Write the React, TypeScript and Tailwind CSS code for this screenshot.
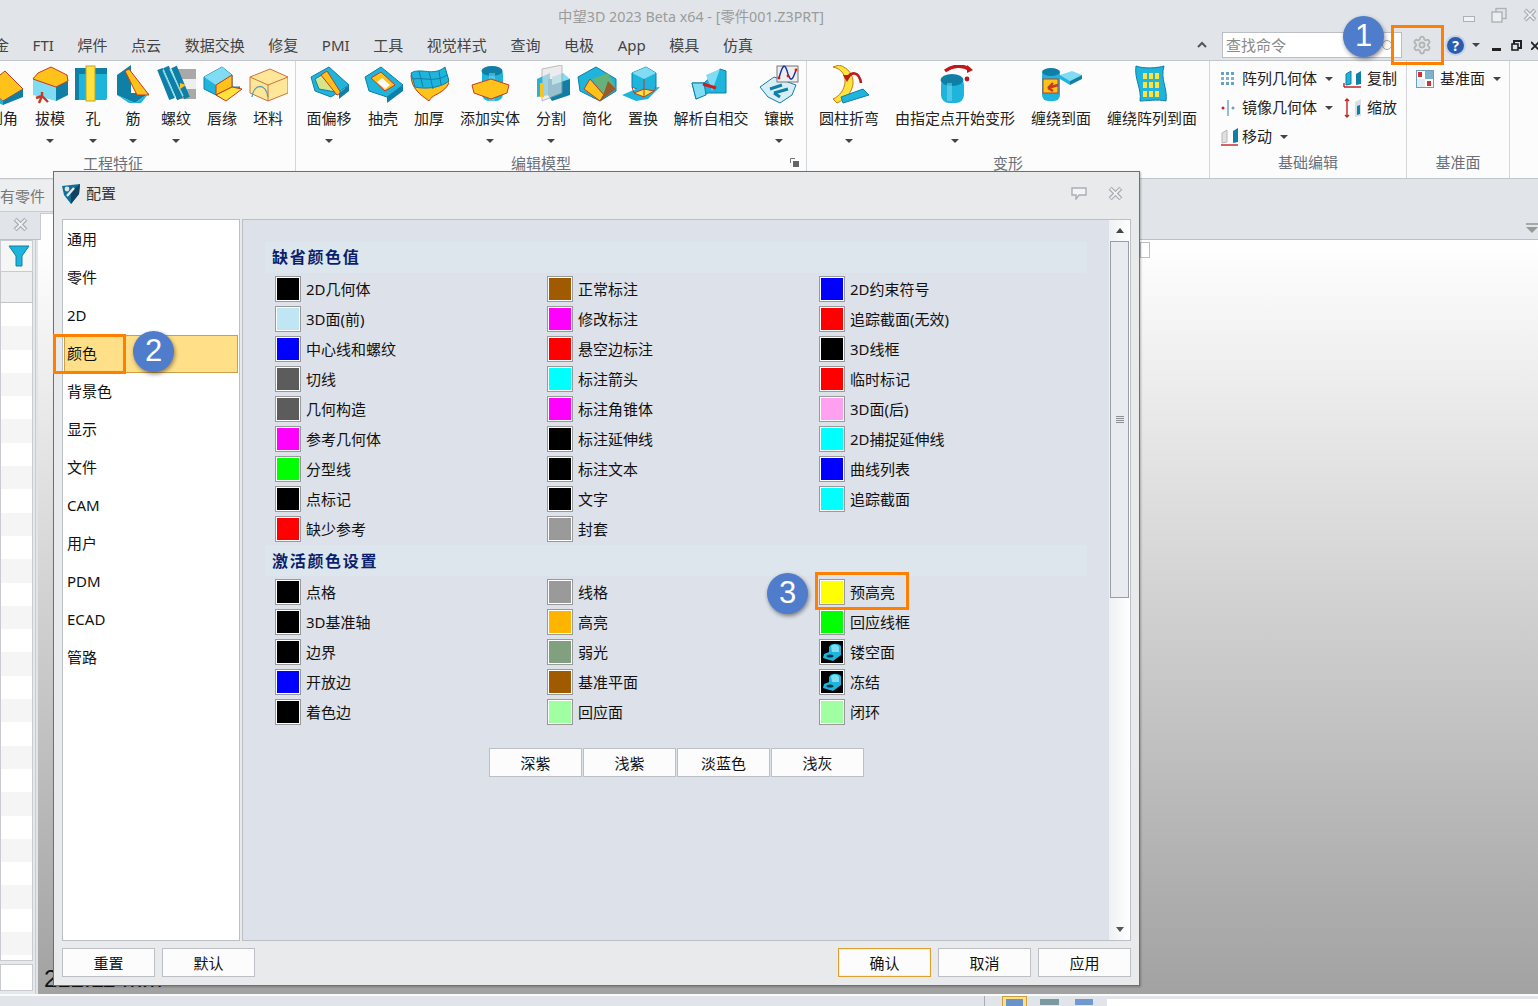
import React from 'react';
import { Settings } from 'lucide-react';

const Caret = () => <span className="inline-block w-0 h-0 border-x-[4px] border-x-transparent border-t-[4px] border-t-[#444]" />;

// ---- ribbon icons
const Svg: React.FC<{ children: React.ReactNode; w?: number; h?: number }> = ({ children, w = 40, h = 40 }) => (
  <svg width={w} height={h} viewBox={`0 0 ${w} ${h}`} className="shrink-0">{children}</svg>
);
const C1 = '#1fb4dc', C2 = '#0f7fa6', C3 = '#7fdcf2', Y1 = '#ffc21a', Y2 = '#ffe23c', R = '#c23b22';

const ribbonIcons: Record<string, React.ReactNode> = {
  chamfer: <Svg><polygon points="2,22 22,6 40,24 20,36" fill={Y1} stroke={R} /><polygon points="2,22 20,36 20,40 2,32" fill={C1} /><polygon points="20,36 40,24 40,32 20,40" fill={C2} /></Svg>,
  draft: <Svg><polygon points="3,12 3,30 26,36 38,30 38,12" fill={C3} /><polygon points="26,20 38,14 38,30 26,36" fill={C2} /><polygon points="8,8 21,2 37,10 38,16 26,22 3,14" fill={Y1} stroke={R} /><path d="M9 38 L12 31 L12 27 M12 31 L18 37 M12 31 L6 33" stroke={R} strokeWidth="2.4" fill="none" /></Svg>,
  hole: <Svg><rect x="2" y="3" width="32" height="32" rx="2" fill={C1} /><rect x="2" y="3" width="32" height="6" fill={C2} /><rect x="2" y="3" width="4" height="32" fill={C2} /><rect x="13" y="1" width="9" height="35" fill={Y2} stroke="#c9a020" /></Svg>,
  rib: <Svg><polygon points="4,10 18,0 18,28 36,28 22,38 4,30" fill={C2} /><polygon points="12,6 16,4 36,30 24,30" fill={Y1} stroke={R} /><polygon points="4,30 22,38 36,28 28,38 16,38" fill={C1} /></Svg>,
  thread: <Svg><rect x="20" y="4" width="20" height="30" fill="#a9a9a9" /><rect x="20" y="14" width="20" height="10" fill="#eee" /><path d="M4 4 L16 34 M10 2 L24 34 M18 2 L31 33" stroke={C2} strokeWidth="6" /><path d="M7 5 L19 32 M14 4 L27 31" stroke={C3} strokeWidth="1.5" /><polygon points="24,18 30,20 24,24" fill={Y1} /></Svg>,
  lip: <Svg><polygon points="2,12 20,2 30,10 30,22 38,22 22,34 2,24" fill={C1} stroke={C2} /><polygon points="2,12 20,2 30,10 14,20" fill={C3} /><polygon points="14,20 30,10 30,22 14,30" fill={Y1} stroke={R} /><polygon points="14,30 30,22 40,24 24,36" fill={Y2} stroke={R} /></Svg>,
  blank: <Svg><polygon points="2,12 22,4 40,12 40,28 20,36 2,28" fill="#ffe79a" stroke="#d0703a" /><path d="M2 12 L20 20 L40 12 M20 20 L20 36" stroke="#d0703a" fill="none" /><path d="M4 32 C6 18 18 18 20 32" stroke="#5a9bb0" strokeWidth="1.4" fill="none" /></Svg>,
  offset: <Svg><polygon points="2,12 20,2 40,20 22,32 6,26" fill={C1} stroke={C2} /><polygon points="6,14 16,8 32,28 10,24" fill="#d7e58a" stroke={C2} /><polygon points="18,6 32,28 28,30 12,10" fill={Y1} stroke={R} /><polygon points="30,28 40,20 40,26 30,34" fill={C2} /></Svg>,
  shell: <Svg><polygon points="2,12 18,2 40,20 24,32 6,26" fill={C1} stroke={C2} /><polygon points="8,13 18,7 32,20 22,26" fill={Y1} stroke={R} /><polygon points="14,17 19,13 27,20 22,24" fill="#fff" /><polygon points="24,32 40,20 40,26 24,38" fill={C2} /></Svg>,
  thicken: <Svg><path d="M2 10 C12 4 24 14 36 4 L40 18 C34 30 24 28 20 36 C12 30 2 24 2 10Z" fill={Y1} stroke={R} /><path d="M2 8 C12 2 24 12 36 2 L40 16 C30 24 14 24 6 22Z" fill={C1} stroke={C2} /><path d="M10 6 L14 22 M20 7 L24 24 M30 6 L32 20 M4 14 C14 12 26 18 38 10" stroke={C2} fill="none" /></Svg>,
  addSolid: <Svg w={42}><rect x="13" y="2" width="21" height="34" rx="7" fill={C1} /><ellipse cx="23" cy="6" rx="10.5" ry="5" fill={C2} /><rect x="20" y="8" width="6" height="28" fill={C3} opacity=".5" /><polygon points="3,20 22,14 40,20 38,28 22,34 5,28" fill={Y1} stroke={R} /></Svg>,
  split: <Svg w={42}><polygon points="7,14 20,8 20,30 7,32" fill={C1} /><polygon points="18,14 40,14 40,30 22,36 18,30" fill={C2} /><polygon points="22,12 33,8 40,14 22,20" fill={C3} /><polygon points="12,4 32,0 32,28 12,36" fill="#e4e4e4" opacity=".65" stroke="#999" /><rect x="10" y="18" width="4" height="14" fill={Y1} /></Svg>,
  simplify: <Svg w={42}><polygon points="2,12 20,2 40,14 40,26 24,36 4,26" fill={C1} stroke={C2} /><polygon points="16,14 32,8 40,24 28,30" fill="#65b27a" /><polygon points="14,14 28,30 24,36 8,24" fill={Y1} stroke={R} /><polygon points="32,16 40,24 24,36 28,28" fill="#9a5a2a" /></Svg>,
  replace: <Svg w={42}><polygon points="10,8 24,2 34,8 34,22 24,28 10,22" fill={C1} stroke={C2} /><polygon points="10,8 24,2 34,8 22,14" fill={C3} /><polygon points="0,30 14,24 38,22 26,34 14,36" fill={C1} /><polygon points="12,28 22,24 32,26 22,32" fill={Y2} stroke={R} /><path d="M10 22 L12 28 M34 22 L32 26 M22 14 L22 32" stroke={R} /></Svg>,
  intersect: <Svg w={42}><polygon points="2,18 14,18 30,4 36,6 36,28 18,28 6,34" fill={C1} stroke={C2} /><polygon points="2,18 14,18 16,30 6,34" fill={C3} stroke={C2} /><polygon points="16,10 30,4 22,26" fill={C3} /><path d="M13 19 L26 23" stroke="#d01c1c" strokeWidth="3" /></Svg>,
  inlay: <Svg w={42}><polygon points="2,22 16,12 38,20 34,30 22,38 10,32" fill="#d8eef6" stroke={C2} /><path d="M12 24 L24 20 M16 28 L30 24 M16 28 L22 32" stroke={C2} strokeWidth="3" /><rect x="19" y="1" width="21" height="16" fill="#eee" stroke="#777" /><path d="M21 13 C25 -2 27 -2 30 9 C33 18 35 14 38 5" stroke="#1a2fa0" strokeWidth="1.4" fill="none" /><circle cx="21" cy="13" r="1.4" fill="#d01c1c" /><circle cx="30" cy="11" r="1.4" fill="#d01c1c" /><circle cx="38" cy="5" r="1.4" fill="#d01c1c" /></Svg>,
  bend: <Svg><path d="M4 2 C22 6 18 28 4 34 L8 38 C28 30 30 6 10 0Z" fill={Y2} stroke="#c57a10" /><polygon points="12,32 34,24 40,30 14,38" fill={C1} stroke={C2} /><path d="M18 14 C22 6 30 6 32 18" stroke="#c01818" strokeWidth="2.6" fill="none" /><polygon points="14,10 22,10 18,17" fill="#c01818" /></Svg>,
  deform: <Svg><rect x="6" y="12" width="23" height="26" rx="8" fill={C1} /><ellipse cx="17" cy="15" rx="11.5" ry="6" fill={C2} /><rect x="12" y="18" width="5" height="18" fill={C3} opacity=".5" /><path d="M10 6 C18 0 28 0 34 4" stroke="#c01818" strokeWidth="3.4" fill="none" /><polygon points="32,0 38,5 32,8" fill="#c01818" /><circle cx="32" cy="14" r="2.4" fill="#c01818" /></Svg>,
  wrap: <Svg w={42}><rect x="2" y="4" width="18" height="32" rx="6" fill={C1} /><ellipse cx="11" cy="7" rx="9" ry="4" fill={C2} /><rect x="3" y="14" width="15" height="14" fill={Y1} stroke={R} /><path d="M18 20 L8 23 M8 23 L13 18 M8 23 L13 26" stroke={R} strokeWidth="2.4" /><polygon points="20,10 32,6 42,10 30,16" fill={C3} /><polygon points="20,10 30,16 30,20 20,14" fill={C1} /><polygon points="30,16 42,10 42,14 30,20" fill={C2} /></Svg>,
  wrapArray: <Svg><path d="M4 1 C12 4 26 3 32 1 C28 14 36 24 34 36 C26 34 14 36 8 36 C10 24 2 14 4 1Z" fill={C1} stroke={C2} />{[8, 17, 26].map(y => [10, 16, 22].map(x => <rect key={`${x}-${y}`} x={x + 1} y={y} width="4" height="6" fill={Y2} />))}</Svg>,
};

const ribbonGroups = [
  {
    label: '工程特征', w: 'w-[319px] -ml-[23px]', pad: 'pr-[46px]', foot: false,
    items: [
      { t: '倒角', i: 'chamfer', w: 'w-[52px]', c: false },
      { t: '拔模', i: 'draft', w: 'w-[42px]', c: true },
      { t: '孔', i: 'hole', w: 'w-[44px]', c: true },
      { t: '筋', i: 'rib', w: 'w-[36px]', c: true },
      { t: '螺纹', i: 'thread', w: 'w-[50px]', c: true },
      { t: '唇缘', i: 'lip', w: 'w-[42px]', c: false },
      { t: '坯料', i: 'blank', w: 'w-[50px]', c: false },
    ],
  },
  {
    label: '编辑模型', w: 'w-[511px]', pad: 'pr-[20px]', foot: true,
    items: [
      { t: '面偏移', i: 'offset', w: 'w-[66px]', c: true },
      { t: '抽壳', i: 'shell', w: 'w-[42px]', c: false },
      { t: '加厚', i: 'thicken', w: 'w-[50px]', c: false },
      { t: '添加实体', i: 'addSolid', w: 'w-[72px]', c: true },
      { t: '分割', i: 'split', w: 'w-[50px]', c: true },
      { t: '简化', i: 'simplify', w: 'w-[42px]', c: false },
      { t: '置换', i: 'replace', w: 'w-[50px]', c: false },
      { t: '解析自相交', i: 'intersect', w: 'w-[86px]', c: false },
      { t: '镶嵌', i: 'inlay', w: 'w-[50px]', c: true },
    ],
  },
  {
    label: '变形', w: 'w-[403px]', pad: '', foot: false,
    items: [
      { t: '圆柱折弯', i: 'bend', w: 'w-[84px]', c: true },
      { t: '由指定点开始变形', i: 'deform', w: 'w-[128px]', c: true },
      { t: '缠绕到面', i: 'wrap', w: 'w-[84px]', c: false },
      { t: '缠绕阵列到面', i: 'wrapArray', w: 'w-[98px]', c: false },
    ],
  },
];

const menus = ['钣金', 'FTI', '焊件', '点云', '数据交换', '修复', 'PMI', '工具', '视觉样式', '查询', '电极', 'App', '模具', '仿真'];

const PatternIcon = () => (
  <Svg w={16} h={16}>{[1, 6, 11].map(y => [1, 6, 11].map(x => <rect key={`${x}${y}`} x={x} y={y} width="3" height="3" fill={y === 6 ? '#7fb2cc' : '#6aa0c0'} />))}</Svg>
);
const MirrorIcon = () => (
  <Svg w={16} h={18}><path d="M8 1 V17" stroke="#6aa0c0" strokeWidth="1.4" /><circle cx="3" cy="9" r="1.5" fill="#c62222" /><circle cx="13" cy="9" r="1.5" fill="#6aa0c0" /></Svg>
);
const CopyIcon = () => (
  <Svg w={20} h={20}><polygon points="3,5 8,2 8,15 3,16" fill={C1} stroke={C2} /><polygon points="13,5 18,2 18,15 13,16" fill={C2} /><path d="M1 18 H18 M1 14 V18" stroke="#c62222" strokeWidth="1.4" /></Svg>
);
const ScaleIcon = () => (
  <Svg w={20} h={20}><path d="M4 1 V19 M2 3 L4 1 L6 3 M2 17 L4 19 L6 17" stroke="#c62222" strokeWidth="1.4" fill="none" /><polygon points="12,4 18,1 18,18 12,19" fill="#d9dfe2" /><polygon points="14,8 17,7 17,16 14,17" fill={C2} /></Svg>
);
const MoveIcon = () => (
  <Svg w={20} h={20}><polygon points="2,6 7,3 7,15 2,16" fill="#e0e0e0" stroke="#b8b8b8" /><polygon points="13,4 18,1 18,15 13,16" fill={C2} /><path d="M1 18 H18" stroke="#c62222" strokeWidth="1.4" /></Svg>
);
const PlaneIcon = () => (
  <Svg w={18} h={18}><rect x=".5" y=".5" width="17" height="17" fill="#fff" stroke="#6aa0c0" /><rect x="9" y="1" width="8" height="8" fill="#7fb2cc" /><rect x="1" y="9" width="8" height="8" fill="#e0edf4" /><rect x="2" y="2" width="4" height="5" fill="#d73030" /><rect x="11" y="11" width="4" height="5" fill="#d73030" /></Svg>
);

const BoldX: React.FC<{ size?: number }> = ({ size = 14 }) => (
  <svg width={size} height={size} viewBox="0 0 14 14" className="shrink-0">
    <path d="M2 2 L12 12 M12 2 L2 12" stroke="#a9aeb4" strokeWidth="4" />
    <path d="M2.5 2.5 L11.5 11.5 M11.5 2.5 L2.5 11.5" stroke="#f2f3f4" strokeWidth="1.6" />
  </svg>
);

const FreezeSwatch = () => (
  <svg viewBox="0 0 22 22" className="w-full h-full block">
    <rect width="22" height="22" fill="#000" />
    <path d="M8 6 C10 2 17 2 20 5 L20 14 L12 20 L2 17 L3 13 L8 11Z" fill={C1} />
    <path d="M10 5 C13 3 16 3 18 6 L18 11 L11 11Z" fill={C3} />
    <ellipse cx="9" cy="15" rx="3.5" ry="1.6" fill="#06384d" />
  </svg>
);

type Sw = [string, string];
const sec1: Sw[][] = [
  [['2D几何体', '#000000'], ['3D面(前)', '#bfe6f2'], ['中心线和螺纹', '#0000ff'], ['切线', '#5c5c5c'], ['几何构造', '#5c5c5c'], ['参考几何体', '#ff00ff'], ['分型线', '#00ff00'], ['点标记', '#000000'], ['缺少参考', '#ff0000']],
  [['正常标注', '#a05a00'], ['修改标注', '#ff00ff'], ['悬空边标注', '#ff0000'], ['标注箭头', '#00ffff'], ['标注角锥体', '#ff00ff'], ['标注延伸线', '#000000'], ['标注文本', '#000000'], ['文字', '#000000'], ['封套', '#9a9a9a']],
  [['2D约束符号', '#0000ff'], ['追踪截面(无效)', '#ff0000'], ['3D线框', '#000000'], ['临时标记', '#ff0000'], ['3D面(后)', '#ffa0f0'], ['2D捕捉延伸线', '#00ffff'], ['曲线列表', '#0000ff'], ['追踪截面', '#00ffff']],
];
const sec2: Sw[][] = [
  [['点格', '#000000'], ['3D基准轴', '#000000'], ['边界', '#000000'], ['开放边', '#0000ff'], ['着色边', '#000000']],
  [['线格', '#9a9a9a'], ['高亮', '#ffb400'], ['弱光', '#80a080'], ['基准平面', '#a05a00'], ['回应面', '#a0ffa0']],
  [['预高亮', '#ffff00'], ['回应线框', '#00ff00'], ['镂空面', 'img'], ['冻结', 'img'], ['闭环', '#a0ffa0']],
];

const SwatchGrid: React.FC<{ cols: Sw[][] }> = ({ cols }) => (
  <div className="grid grid-cols-[272px_272px_272px] pl-[10px]">
    {cols.map((col, i) => (
      <div key={i} className="flex flex-col">
        {col.map(([label, color]) => (
          <div key={label} className="h-[30px] flex items-center gap-[5px]">
            <div className="w-[26px] h-[26px] border border-[#9a9a9a] bg-white p-px shrink-0">
              {color === 'img' ? <FreezeSwatch /> : <div className="w-full h-full" style={{ background: color }} />}
            </div>
            <span className="text-[15px] text-[#111] whitespace-nowrap">{label}</span>
          </div>
        ))}
      </div>
    ))}
  </div>
);

const DlgButton: React.FC<{ children: React.ReactNode; primary?: boolean }> = ({ children, primary }) => (
  <div className={`w-[93px] h-[29px] pt-px flex items-center justify-center bg-[#fcfcfc] text-[15px] text-[#111] border ${primary ? 'border-[#e0a030] shadow-[inset_0_0_0_1px_#fff3c0]' : 'border-[#bcc0c6]'}`}>
    {children}
  </div>
);

const Badge: React.FC<{ n: number; cls: string }> = ({ n, cls }) => (
  <div className={`absolute w-[41px] h-[41px] rounded-full bg-[#4f7ccb] text-white text-[31px] flex items-center justify-center shadow-[1px_2px_4px_rgba(0,0,0,0.45)] font-['Liberation_Sans'] ${cls}`}>{n}</div>
);

const navItems = ['通用', '零件', '2D', '颜色', '背景色', '显示', '文件', 'CAM', '用户', 'PDM', 'ECAD', '管路'];

export default function App() {
  return (
    <div className="relative w-[1538px] h-[1006px] overflow-hidden flex flex-col bg-[#e1e5e9] text-[#222] text-[15px] font-['Noto_Sans','Noto_Sans_CJK_SC',sans-serif]">
      {/* title bar */}
      <div className="relative h-[30px] shrink-0 flex items-center justify-center pr-[156px] pt-[3px] text-[14.3px] text-[#9b9b9b]">
        中望3D 2023 Beta x64 - [零件001.Z3PRT]
        <div className="absolute right-0 top-[7px] flex items-center gap-[16px] pr-px">
          <span className="w-[12px] h-[6px] mt-[8px] border border-[#aeb2b6] bg-[#f1f2f3]" />
          <svg width="16" height="16" viewBox="0 0 16 16"><rect x="5" y="1.5" width="10" height="10" fill="none" stroke="#aeb2b6" strokeWidth="1.4" /><rect x="1" y="5" width="10" height="10" fill="#eceef0" stroke="#aeb2b6" strokeWidth="1.4" /></svg>
          <BoldX />
        </div>
      </div>

      {/* menu row */}
      <div className="relative h-[30px] shrink-0 flex items-center">
        <div className="flex items-center gap-[23.6px] -ml-[21px] pt-px text-[15px] text-[#444]">
          {menus.map(m => <span key={m} className="whitespace-nowrap">{m}</span>)}
        </div>
        <div className="absolute right-0 top-0 h-[30px] flex items-center">
          <svg width="12" height="10" viewBox="0 0 12 10" className="mr-[14px]"><path d="M2 7 L6 3 L10 7" stroke="#555" strokeWidth="2" fill="none" /></svg>
          <div className="relative w-[180px] h-[26px] border border-[#bcc0c6] bg-white flex items-center pl-[3px] text-[#8a8a8a]">
            查找命令
            <span className="absolute right-[9px] top-[7px] w-[10px] h-[10px] rounded-full border border-[#aaa]" />
          </div>
          <div className="w-[40px] flex justify-center"><Settings size={20} className="text-[#b4b4b4]" strokeWidth={2.2} /></div>
          <div className="w-[21px] h-[21px] ml-[3px] rounded-full bg-[#2a5db0] border-2 border-[#c4d2e6] text-white text-[14px] font-bold flex items-center justify-center">?</div>
          <span className="ml-[6px] flex"><Caret /></span>
          <span className="ml-[12px] w-[9px] h-[3px] mt-[8px] bg-[#222]" />
          <svg width="11" height="11" viewBox="0 0 11 11" className="ml-[10px]"><rect x="3" y="1" width="7" height="7" fill="none" stroke="#222" strokeWidth="2" /><rect x="1" y="4" width="6" height="6" fill="#e1e5e9" stroke="#222" strokeWidth="1.6" /></svg>
          <svg width="7" height="9" viewBox="0 0 7 9" className="ml-[9px]"><path d="M0 1 L8 9 M8 1 L0 9" stroke="#222" strokeWidth="1.8" /></svg>
        </div>
      </div>

      {/* ribbon */}
      <div className="h-[119px] shrink-0 bg-[#fcfcfc] border-y border-[#c2c6ca] flex">
        {ribbonGroups.map(g => (
          <div key={g.label} className={`relative shrink-0 flex flex-col border-r border-[#d4d7da] ${g.w}`}>
            <div className="flex flex-1">
              {g.items.map(it => (
                <div key={it.t} className={`flex flex-col items-center shrink-0 ${it.w}`}>
                  <div className="h-[44px] flex items-end justify-center">{ribbonIcons[it.i]}</div>
                  <div className="h-[24px] mt-[1px] flex items-center whitespace-nowrap text-[#222]">{it.t}</div>
                  <div className="h-[22px] flex items-center">{it.c && <Caret />}</div>
                </div>
              ))}
            </div>
            <div className={`h-[27px] pb-[4px] flex items-center justify-center text-[#6a7078] ${g.pad}`}>{g.label}</div>
            {g.foot && (
              <svg width="9" height="9" viewBox="0 0 9 9" className="absolute right-[7px] bottom-[11px]"><path d="M0.5 5 V0.5 H5" stroke="#777" fill="none" /><rect x="3" y="3" width="6" height="6" fill="#666" /></svg>
            )}
          </div>
        ))}
        {/* basic edit */}
        <div className="w-[197px] shrink-0 flex flex-col border-r border-[#d4d7da] pl-[10px] pt-[3px]">
          <div className="flex-1 flex flex-col">
            <div className="h-[29px] flex items-center">
              <span className="w-[22px] flex"><PatternIcon /></span>
              <span className="w-[75px]">阵列几何体</span>
              <span className="ml-[8px] flex"><Caret /></span>
              <span className="ml-[10px] w-[24px] flex"><CopyIcon /></span>
              <span>复制</span>
            </div>
            <div className="h-[29px] flex items-center">
              <span className="w-[22px] flex"><MirrorIcon /></span>
              <span className="w-[75px]">镜像几何体</span>
              <span className="ml-[8px] flex"><Caret /></span>
              <span className="ml-[10px] w-[24px] flex"><ScaleIcon /></span>
              <span>缩放</span>
            </div>
            <div className="h-[29px] flex items-center">
              <span className="w-[22px] flex"><MoveIcon /></span>
              <span>移动</span>
              <span className="ml-[8px] flex"><Caret /></span>
            </div>
          </div>
          <div className="h-[27px] pb-[4px] -ml-[10px] flex items-center justify-center text-[#6a7078]">基础编辑</div>
        </div>
        {/* datum */}
        <div className="w-[103px] shrink-0 flex flex-col border-r border-[#d4d7da] pt-[3px]">
          <div className="flex-1">
            <div className="h-[29px] flex items-center pl-[9px]">
              <span className="w-[24px] flex"><PlaneIcon /></span>
              <span>基准面</span>
              <span className="ml-[8px] flex"><Caret /></span>
            </div>
          </div>
          <div className="h-[27px] pb-[4px] flex items-center justify-center text-[#6a7078]">基准面</div>
        </div>
      </div>

      {/* document tab strip */}
      <div className="relative h-[61px] shrink-0 border-b border-[#bcc0c6]">
        <div className="w-[53px] h-[32px] mt-[1px] bg-[#eceef0] border-b border-[#c8ccd0] flex items-center pr-[8px] pt-[1px] overflow-hidden text-[#777] whitespace-nowrap">有零件</div>
        <div className="flex items-center h-[24px] pl-[13px]"><BoldX size={15} /></div>
        <div className="absolute left-[40px] top-[34px] w-[13px] h-[27px] bg-white border-l border-t border-[#c8ccd0]" />
        <svg width="12" height="10" viewBox="0 0 12 10" className="absolute right-0 top-[44px]"><path d="M0 1 H12" stroke="#999" strokeWidth="1.6" /><polygon points="0,4 12,4 6,10" fill="#999" /></svg>
      </div>

      {/* body */}
      <div className="flex-1 flex min-h-0">
        <div className="w-[36px] shrink-0 bg-[#e6e8ea] border-r border-[#c8ccd0] flex flex-col pr-[2px] pb-[3px]">
          <div className="h-[32px] bg-[#f6f6f6] border border-[#c8ccd0] flex items-center justify-end pr-[2px]">
            <svg width="22" height="24" viewBox="0 0 22 24"><polygon points="1,2 21,2 14,12 14,22 8,22 8,12" fill={C1} stroke={C2} /></svg>
          </div>
          <div className="h-[31px] bg-[#edeef0] border-x border-b border-[#c2c6ca]" />
          <div className="flex-1 overflow-hidden bg-white border-x border-b border-[#c8ccd0]">
            {Array.from({ length: 29 }).map((_, i) => (
              <div key={i} className={`h-[23.3px] ${i % 2 ? 'bg-[#f5f5f5]' : 'bg-white'}`} />
            ))}
          </div>
          <div className="h-[27px] mt-[3px] bg-white border border-[#c8ccd0]" />
        </div>
        <div className="relative flex-1 ml-[2px] flex flex-col justify-end pl-[6px] bg-gradient-to-b from-white to-[#a2a2a2]">
          <div className="text-[24px] leading-[24px] text-[#111] pb-[3px] font-['Liberation_Sans']">212.11 mm</div>
          <div className="absolute left-[1102px] top-[2px] w-[10px] h-[16px] bg-white border border-[#bcc0c6]" />
        </div>
      </div>

      {/* status bar */}
      <div className="h-[12px] shrink-0 border-t-2 border-white/80 flex">
        <div className="w-[985px] shrink-0 border-r border-[#a8acb0]" />
        <div className="ml-[17px] w-[25px] h-[12px] bg-[#ffdf88] border border-[#d0a040] pt-[2px] px-[3px]"><div className="h-full bg-[#6a94c8]" /></div>
        <div className="ml-[13px] w-[19px] h-[6px] mt-[3px] bg-[#7a9aa0]" />
        <div className="ml-[16px] w-[18px] h-[6px] mt-[3px] bg-[#7099d0]" />
        <div className="ml-[14px] flex-1 bg-white mt-[3px]" />
      </div>

      {/* config dialog */}
      <div className="absolute left-[53px] top-[171px] w-[1087px] h-[815px] bg-[#e8eaec] border border-[#6c7177] flex flex-col px-[8px] shadow-[1px_1px_2px_rgba(0,0,0,0.25)]">
        <div className="h-[47px] shrink-0 flex items-center pb-[4px]">
          <svg width="18" height="20" viewBox="0 0 18 20" className="mr-[6px]">
            <polygon points="0,2 18,0 17,10 9,20 2,11" fill="#0f6f98" />
            <polygon points="9,8 18,0 17,10 9,20" fill="#12425e" />
            <path d="M5 12 L12 4" stroke="#e8e8e8" strokeWidth="2.4" />
            <circle cx="5" cy="5" r="2.4" fill="#dfe4e8" />
          </svg>
          <span className="text-[#333]">配置</span>
          <div className="ml-auto flex items-center gap-[21px] pr-[8px]">
            <svg width="16" height="13" viewBox="0 0 16 13"><path d="M1 1 H15 V8 H8 L5 12 V8 H1Z" fill="#f3f4f5" stroke="#a9aeb4" strokeWidth="1.4" /></svg>
            <BoldX size={15} />
          </div>
        </div>

        <div className="h-[722px] shrink-0 flex gap-[2px]">
          <div className="w-[178px] shrink-0 bg-white border border-[#bcc0c6] pt-px">
            {navItems.map(n => (
              <div key={n} className={`h-[38px] mx-px pl-[2px] pb-px flex items-center border text-[15px] text-[#111] ${n === '颜色' ? 'bg-[#ffdf88] border-[#cf9f45]' : 'border-transparent'}`}>{n}</div>
            ))}
          </div>
          <div className="flex-1 flex bg-[#dde1e9] border border-[#bcc0c6]">
            <div className="flex-1 pt-[22px] pl-[22px]">
              <div className="w-[822px] h-[31px] bg-[#dce6ec] pl-[7px] pb-[2px] flex items-center font-bold text-[16px] tracking-[1.7px] text-[#0a1f6e]">缺省颜色值</div>
              <div className="h-[271px] mt-px"><SwatchGrid cols={sec1} /></div>
              <div className="w-[822px] h-[31px] bg-[#dce6ec] pl-[7px] flex items-center font-bold text-[16px] tracking-[1.7px] text-[#0a1f6e]">激活颜色设置</div>
              <div className="mt-px"><SwatchGrid cols={sec2} /></div>
              <div className="flex gap-px mt-[21px] ml-[224px]">
                {['深紫', '浅紫', '淡蓝色', '浅灰'].map(b => <DlgButton key={b}>{b}</DlgButton>)}
              </div>
            </div>
            <div className="w-[21px] shrink-0 bg-gradient-to-r from-[#eef0f3] to-white flex flex-col items-center">
              <div className="h-[21px] flex items-center"><span className="w-0 h-0 border-x-[4.5px] border-x-transparent border-b-[5px] border-b-[#444]" /></div>
              <div className="w-[19px] h-[357px] bg-[#e8ecf1] border border-[#9a9ea4] flex flex-col items-center justify-center gap-[1px]">
                <span className="w-[8px] h-px bg-[#8a8e94]" /><span className="w-[8px] h-px bg-[#8a8e94]" /><span className="w-[8px] h-px bg-[#8a8e94]" /><span className="w-[8px] h-px bg-[#8a8e94]" />
              </div>
              <div className="mt-auto h-[21px] flex items-center"><span className="w-0 h-0 border-x-[4.5px] border-x-transparent border-t-[5px] border-t-[#555]" /></div>
            </div>
          </div>
        </div>

        <div className="mt-[7px] flex">
          <div className="flex gap-[7px]"><DlgButton>重置</DlgButton><DlgButton>默认</DlgButton></div>
          <div className="ml-auto flex gap-[7px]"><DlgButton primary>确认</DlgButton><DlgButton>取消</DlgButton><DlgButton>应用</DlgButton></div>
        </div>
      </div>

      {/* callouts */}
      <div className="absolute left-[1391px] top-[25px] w-[53px] h-[40px] border-[3px] border-[#ff8000]" />
      <div className="absolute left-[53px] top-[334px] w-[73px] h-[40px] border-[3px] border-[#ff8000]" />
      <div className="absolute left-[815px] top-[572px] w-[94px] h-[38px] border-[3px] border-[#ff8000]" />
      <Badge n={1} cls="left-[1343px] top-[16px]" />
      <Badge n={2} cls="left-[133px] top-[331px]" />
      <Badge n={3} cls="left-[767px] top-[573px]" />
    </div>
  );
}
